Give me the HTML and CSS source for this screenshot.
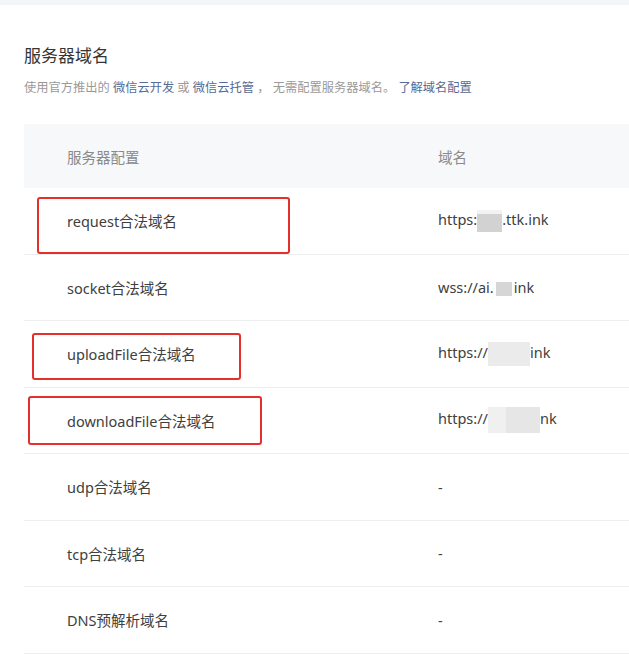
FILE: index.html
```html
<!DOCTYPE html>
<html lang="zh-CN">
<head>
<meta charset="utf-8">
<title>服务器域名</title>
<link rel="stylesheet" href="styles.css">
</head>
<body>
<div class="topbar"></div>
<div class="page">
  <h2 class="title">服务器域名</h2>
  <p class="desc">使用官方推出的 <a class="link">微信云开发</a> 或 <a class="link">微信云托管</a> ， 无需配置服务器域名。 <a class="link">了解域名配置</a></p>
  <div class="table">
    <div class="row head">
      <div class="c1">服务器配置</div>
      <div class="c2">域名</div>
    </div>
    <div class="row">
      <div class="c1">request合法域名</div>
      <div class="c2">https:<span class="blur b1"></span>.ttk.ink</div>
      <div class="mark m1"></div>
    </div>
    <div class="row">
      <div class="c1">socket合法域名</div>
      <div class="c2">wss://ai.<span class="blur b2"></span>ink</div>
    </div>
    <div class="row">
      <div class="c1">uploadFile合法域名</div>
      <div class="c2">https://<span class="blur b3"></span>ink</div>
      <div class="mark m2"></div>
    </div>
    <div class="row">
      <div class="c1">downloadFile合法域名</div>
      <div class="c2">https://<span class="blur b4"></span>nk</div>
      <div class="mark m3"></div>
    </div>
    <div class="row">
      <div class="c1">udp合法域名</div>
      <div class="c2">-</div>
    </div>
    <div class="row">
      <div class="c1">tcp合法域名</div>
      <div class="c2">-</div>
    </div>
    <div class="row">
      <div class="c1">DNS预解析域名</div>
      <div class="c2">-</div>
    </div>
  </div>
</div>
</body>
</html>
```

FILE: styles.css
```css
* { box-sizing: border-box; }
html, body {
  margin: 0;
  padding: 0;
  background: #ffffff;
  font-family: "Noto Sans", "Noto Sans CJK SC", sans-serif;
  color: #353535;
}
.topbar {
  height: 5px;
  background: #f4f5f7;
}
.page {
  padding: 0 0 0 24px;
  overflow: hidden;
}
.title {
  margin: 38px 0 0 0;
  font-size: 17px;
  line-height: 26px;
  font-weight: 400;
  color: #353535;
}
.desc {
  margin: 10px 0 0 0;
  font-size: 12.25px;
  line-height: 18px;
  color: #9a9a9a;
}
.link {
  color: #576b95;
  text-decoration: none;
}
.table {
  margin-top: 27px;
  width: 620px;
}
.row {
  position: relative;
  display: flex;
  align-items: center;
  height: 66.5px;
  border-bottom: 1px solid #eeeeee;
  font-size: 14.5px;
  color: #404040;
}
.row.head {
  height: 64px;
  background: #f6f8f9;
  border-bottom: none;
  color: #8a8a8a;
}
.c1 {
  width: 371px;
  padding-left: 43px;
  flex: none;
}
.c2 {
  padding-left: 43px;
  flex: 1;
  white-space: nowrap;
}
.blur {
  display: inline-block;
  vertical-align: middle;
  background: #d9d9d9;
}
.b1 { width: 25px; height: 22px; background: linear-gradient(#f2f2f2 0 20%, #d2d2d2 20% 100%); }
.b2 { width: 16px; height: 14px; background: #d6d6d6; margin: 0 2px; }
.b3 { width: 42px; height: 24px; background: #ebebeb; }
.b4 { width: 52px; height: 26px; background: linear-gradient(90deg, #f0f0f0 0 35%, #e6e6e6 35% 100%); }
.mark {
  position: absolute;
  border: 2px solid #e3302b;
  border-radius: 3px;
}
.m1 { left: 13px; top: 9px; width: 253px; height: 57px; }
.m2 { left: 8px; top: 12px; width: 209px; height: 47px; }
.m3 { left: 4px; top: 8px; width: 234px; height: 49px; }
```
